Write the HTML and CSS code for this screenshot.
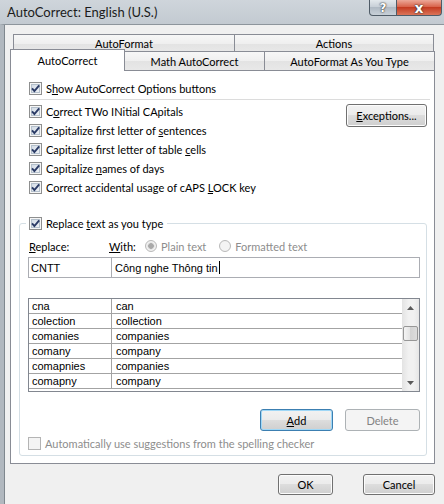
FILE: index.html
```html
<!DOCTYPE html>
<html>
<head>
<meta charset="utf-8">
<link rel="stylesheet" href="styles.css">
</head>
<body>
<div class="window">
  <div class="titlebar">
    <span class="title">AutoCorrect: English (U.S.)</span>
    <div class="caption-btns">
      <span class="cbtn help">?</span>
      <span class="cbtn close">x</span>
    </div>
  </div>
  <div class="client">
    <div class="tabctl">
      <div class="tabrow back">
        <div class="tab t-af">AutoFormat</div>
        <div class="tab t-act">Actions</div>
      </div>
      <div class="tabrow front">
        <div class="tab sel t-ac">AutoCorrect</div>
        <div class="tab t-mac">Math AutoCorrect</div>
        <div class="tab t-afy">AutoFormat As You Type</div>
      </div>
      <div class="pane">
        <label class="row"><span class="cb on"><svg viewBox="0 0 11 11" width="11" height="11"><path d="M2 5.3 L4.4 8 L9.2 2.4" /></svg></span><span>S<u>h</u>ow AutoCorrect Options buttons</span></label>
        <div class="sep"></div>
        <div class="checks-wrap">
          <div class="checks">
            <label class="row"><span class="cb on"><svg viewBox="0 0 11 11" width="11" height="11"><path d="M2 5.3 L4.4 8 L9.2 2.4" /></svg></span><span>C<u>o</u>rrect TWo INitial CApitals</span></label>
            <label class="row"><span class="cb on"><svg viewBox="0 0 11 11" width="11" height="11"><path d="M2 5.3 L4.4 8 L9.2 2.4" /></svg></span><span>Capitalize first letter of <u>s</u>entences</span></label>
            <label class="row"><span class="cb on"><svg viewBox="0 0 11 11" width="11" height="11"><path d="M2 5.3 L4.4 8 L9.2 2.4" /></svg></span><span>Capitalize first letter of table <u>c</u>ells</span></label>
            <label class="row"><span class="cb on"><svg viewBox="0 0 11 11" width="11" height="11"><path d="M2 5.3 L4.4 8 L9.2 2.4" /></svg></span><span>Capitalize <u>n</u>ames of days</span></label>
            <label class="row"><span class="cb on"><svg viewBox="0 0 11 11" width="11" height="11"><path d="M2 5.3 L4.4 8 L9.2 2.4" /></svg></span><span>Correct accidental usage of cAPS <u>L</u>OCK key</span></label>
          </div>
          <button class="btn exc"><u>E</u>xceptions...</button>
        </div>
        <fieldset class="group">
          <legend class="row legend"><span class="cb on"><svg viewBox="0 0 11 11" width="11" height="11"><path d="M2 5.3 L4.4 8 L9.2 2.4" /></svg></span><span>Replace <u>t</u>ext as you type</span></legend>
          <div class="labels">
            <span class="lbl-rep"><u>R</u>eplace:</span>
            <span class="lbl-with"><u>W</u>ith:</span>
            <span class="radio on"></span><span class="dis">Plain text</span>
            <span class="radio r2"></span><span class="dis">Formatted text</span>
          </div>
          <div class="inputs">
            <div class="field f-rep">CNTT</div>
            <div class="field f-with">Công nghe Thông tin<span class="caret"></span></div>
          </div>
          <div class="list">
            <div class="rows">
              <div class="lrow"><span class="c1">cna</span><span class="c2">can</span></div>
              <div class="lrow"><span class="c1">colection</span><span class="c2">collection</span></div>
              <div class="lrow"><span class="c1">comanies</span><span class="c2">companies</span></div>
              <div class="lrow"><span class="c1">comany</span><span class="c2">company</span></div>
              <div class="lrow"><span class="c1">comapnies</span><span class="c2">companies</span></div>
              <div class="lrow"><span class="c1">comapny</span><span class="c2">company</span></div>
            </div>
            <div class="vscroll">
              <div class="arrow"><svg viewBox="0 0 7 4" width="7" height="4"><path d="M0 4 L3.5 0 L7 4 Z"/></svg></div>
              <div class="thumb"></div>
              <div class="track"></div>
              <div class="arrow"><svg viewBox="0 0 7 4" width="7" height="4"><path d="M0 0 L7 0 L3.5 4 Z"/></svg></div>
            </div>
          </div>
          <div class="actions">
            <button class="btn add"><u>A</u>dd</button>
            <button class="btn del">Delete</button>
          </div>
          <label class="row auto"><span class="cb off"></span><span class="dis">Automatically use suggestions from the spelling checker</span></label>
        </fieldset>
      </div>
      <div class="footer">
        <button class="btn ok">OK</button>
        <button class="btn cancel">Cancel</button>
      </div>
    </div>
  </div>
</div>
</body>
</html>
```
FILE: styles.css
```css
* { box-sizing: border-box; }
html, body { margin: 0; padding: 0; }
body {
  width: 444px; height: 504px; overflow: hidden;
  background: #f0f0f0;
  font-family: Lato, "Noto Sans", sans-serif;
  font-size: 11px; color: #000;
}
u { text-decoration: underline; text-underline-offset: 1px; }
.window { display: flex; flex-direction: column; height: 504px; }

.titlebar {
  height: 24px; flex-shrink: 0;
  display: flex; align-items: flex-start;
  background: linear-gradient(#cfd5db, #c3cad1);
  padding-left: 7px;
}
.title { font-size: 13px; line-height: 24px; color: #1b1b1b; }
.caption-btns { margin-left: auto; margin-right: 2px; display: flex; }
.cbtn {
  height: 16px; display: flex; align-items: center; justify-content: center;
  border: 1px solid #4f5b67; border-top: none;
  color: #fff; font-family: "DejaVu Sans", sans-serif; font-weight: bold; font-size: 12px;
  text-shadow: 0 0 1px #222, 0 0 2px #333;
}
.help { width: 28px; border-radius: 0 0 0 4px; background: linear-gradient(#e3e8ec, #c5cdd5 50%, #b0bac4 50%, #c8d0d8); }
.close { width: 45px; border-left: none; border-radius: 0 0 4px 0; background: linear-gradient(#eca898, #d65c43 50%, #c43c22 50%, #db7459); font-size: 14px; }

.client {
  flex: 1;
  border-left: 4px solid #b1b8bf;
  border-top: 1px solid #8d959c;
  box-shadow: inset 1px 0 0 #7f878e;
  padding: 9px 0 0 6px;
}
.tabctl { width: 425px; }
.tabrow { display: flex; }
.tab {
  display: flex; align-items: center; justify-content: center;
  border: 1px solid #898c95; border-bottom: none;
  background: linear-gradient(#f7f7f7, #efefef 50%, #e3e3e3 50%, #e8e8e8);
  color: #000;
}
.tab + .tab { margin-left: -1px; }
.back { margin-left: 3px; height: 18px; }
.t-af { width: 222px; }
.t-act { width: 200px; }
.front { height: 21px; margin-top: -3px; align-items: flex-end; position: relative; z-index: 1; }
.front .tab { height: 19px; }
.t-ac { width: 115px; }
.t-mac { width: 141px; }
.t-afy { width: 171px; }
.tab.sel { height: 22px; margin-bottom: -1px; background: #fff; }

.pane {
  height: 394px;
  border: 1px solid #898c95;
  background: #fff;
  padding: 8px 0 0 18px;
}
.row { display: flex; align-items: center; height: 19px; gap: 4px; }
.cb {
  width: 13px; height: 13px; flex-shrink: 0;
  display: inline-flex; align-items: center; justify-content: center;
  border: 1px solid #8e8f8f;
  background: linear-gradient(135deg, #cdd7e2, #f4f6f9);
  box-shadow: inset 0 0 0 1px #f6f6f6, inset 0 0 0 2px #b4c0cc;
}
.cb svg path { fill: none; stroke: #2b3b66; stroke-width: 1.9; }
.cb.off { border-color: #b4b4b4; background: #f4f4f4; box-shadow: none; }
.sep { height: 1px; background: #dcdcdc; margin: 1px 4px 2px 0; }
.checks-wrap { display: flex; align-items: flex-start; }
.checks { display: flex; flex-direction: column; }

.btn {
  font-family: inherit; font-size: 11px; color: #000;
  border: 1px solid #707070; border-radius: 3px;
  background: linear-gradient(#f2f2f2, #ebebeb 50%, #dddddd 50%, #cfcfcf);
  box-shadow: inset 0 0 0 1px #fcfcfc;
  padding: 0; display: flex; align-items: center; justify-content: center;
}
.exc { margin: 2px 7px 0 auto; width: 81px; height: 23px; }

.group {
  margin: 17px 7px 0 -10px;
  padding: 0 6px 3px 8px;
  border: 1px solid #d5dfe5; border-radius: 3px;
  min-width: 0;
}
.legend { padding: 0 4px 0 3px; margin-left: -2px; }
.labels { display: flex; align-items: center; height: 16px; margin-top: 5px; }
.lbl-rep { width: 81px; padding-left: 1px; }
.lbl-with { width: 36px; }
.dis { color: #8d8d8d; }
.radio {
  width: 12px; height: 12px; border-radius: 50%; flex-shrink: 0;
  border: 1px solid #b9b9b9;
  background: radial-gradient(circle, #f4f4f4 60%, #e6e6e6);
  margin-right: 4px;
}
.radio.on { background: radial-gradient(circle, #a9a9a9 0 2.5px, #d8d8d8 3px, #f3f3f3 4px, #e6e6e6); }
.r2 { margin-left: 13px; }

.inputs { display: flex; margin-top: 3px; height: 21px; }
.field {
  border: 1px solid #abadb3; background: #fff;
  font-family: "Liberation Sans", Arial, sans-serif; font-size: 11px;
  display: flex; align-items: center;
}
.f-rep { width: 84px; padding-left: 2px; }
.f-with { flex: 1; margin-left: -1px; padding-left: 3px; }
.caret { display: inline-block; width: 1px; height: 13px; background: #000; margin-left: 1px; }

.list {
  margin-top: 20px; height: 94px;
  border: 1px solid #828790; background: #fff;
  display: flex; overflow: hidden;
  font-family: "Liberation Sans", Arial, sans-serif; font-size: 11px;
}
.rows { flex: 1; }
.lrow { display: flex; height: 15px; border-bottom: 1px solid #a3a3a3; align-items: center; }
.c1 { width: 83px; height: 100%; border-right: 1px solid #a3a3a3; padding-left: 3px; display: flex; align-items: center; }
.c2 { padding-left: 4px; }
.vscroll {
  width: 17px; display: flex; flex-direction: column;
  background: linear-gradient(90deg, #e3e3e3, #f1f1f1 40%, #f1f1f1 70%, #e6e6e6);
}
.arrow { height: 17px; display: flex; align-items: center; justify-content: center; }
.arrow path { fill: #5a5a5a; }
.thumb {
  margin: 10px 1px 0 1px; height: 15px;
  border: 1px solid #979797; border-radius: 2px;
  background: linear-gradient(90deg, #f4f4f4, #e2e2e2 50%, #d3d3d3 50%, #dcdcdc);
}
.track { flex: 1; }

.actions { display: flex; justify-content: flex-end; gap: 12px; margin-top: 17px; }
.add { width: 73px; height: 22px; border-color: #3c7fb1; box-shadow: inset 0 0 0 1px #9fd7f6; }
.del { width: 75px; height: 22px; border-color: #adb2b5; background: #f4f4f4; box-shadow: none; color: #838383; }
.auto { margin-top: 4px; height: 17px; }

.footer { display: flex; justify-content: flex-end; gap: 30px; margin-top: 10px; }
.ok { width: 55px; height: 21px; }
.cancel { width: 72px; height: 21px; }
```
